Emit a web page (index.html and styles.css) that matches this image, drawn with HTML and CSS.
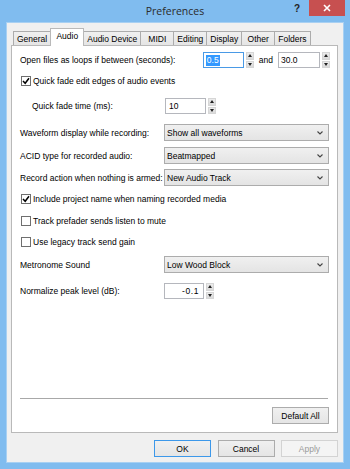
FILE: index.html
```html
<!DOCTYPE html>
<html>
<head>
<meta charset="utf-8">
<title>Preferences</title>
<link rel="stylesheet" href="styles.css">
</head>
<body>
<div class="window">
  <div class="titlebar">
    <div class="title">Preferences</div>
    <div class="controls">
      <span class="help">?</span>
      <span class="close"><svg width="8" height="8" viewBox="0 0 8 8"><path d="M1 1 L7 7 M7 1 L1 7" stroke="#fff" stroke-width="1.6" fill="none"/></svg></span>
    </div>
  </div>
  <div class="client">
    <div class="tabs">
      <div class="tab">General</div>
      <div class="tab active">Audio</div>
      <div class="tab">Audio Device</div>
      <div class="tab">MIDI</div>
      <div class="tab">Editing</div>
      <div class="tab">Display</div>
      <div class="tab">Other</div>
      <div class="tab">Folders</div>
    </div>
    <div class="panel">
      <div class="row first">
        <span class="label">Open files as loops if between (seconds):</span>
        <div class="pair">
          <div class="spin w41"><div class="field focus"><span class="hl">0.5</span></div><div class="arrows"><span class="up"></span><span class="down"></span></div></div>
          <span class="and">and</span>
          <div class="spin w42"><div class="field">30.0</div><div class="arrows"><span class="up"></span><span class="down"></span></div></div>
        </div>
      </div>
      <div class="row">
        <span class="check on"><svg width="8" height="8" viewBox="0 0 8 8"><path d="M1 4 L3.2 6.3 L7 1.3" stroke="#000" stroke-width="1.5" fill="none"/></svg></span>
        <span>Quick fade edit edges of audio events</span>
      </div>
      <div class="row g9">
        <span class="label indent">Quick fade time (ms):</span>
        <div class="spin w41"><div class="field pad3">10</div><div class="arrows"><span class="up"></span><span class="down"></span></div></div>
      </div>
      <div class="row tall g10">
        <span class="label">Waveform display while recording:</span>
        <div class="combo"><span>Show all waveforms</span><svg class="chev" width="6" height="4" viewBox="0 0 6 4"><path d="M0.5 0.5 L3 3 L5.5 0.5" stroke="#444" stroke-width="1.1" fill="none"/></svg></div>
      </div>
      <div class="row tall g6">
        <span class="label">ACID type for recorded audio:</span>
        <div class="combo"><span>Beatmapped</span><svg class="chev" width="6" height="4" viewBox="0 0 6 4"><path d="M0.5 0.5 L3 3 L5.5 0.5" stroke="#444" stroke-width="1.1" fill="none"/></svg></div>
      </div>
      <div class="row tall">
        <span class="label">Record action when nothing is armed:</span>
        <div class="combo"><span>New Audio Track</span><svg class="chev" width="6" height="4" viewBox="0 0 6 4"><path d="M0.5 0.5 L3 3 L5.5 0.5" stroke="#444" stroke-width="1.1" fill="none"/></svg></div>
      </div>
      <div class="row">
        <span class="check on"><svg width="8" height="8" viewBox="0 0 8 8"><path d="M1 4 L3.2 6.3 L7 1.3" stroke="#000" stroke-width="1.5" fill="none"/></svg></span>
        <span>Include project name when naming recorded media</span>
      </div>
      <div class="row g6">
        <span class="check"></span>
        <span>Track prefader sends listen to mute</span>
      </div>
      <div class="row">
        <span class="check"></span>
        <span>Use legacy track send gain</span>
      </div>
      <div class="row tall g6">
        <span class="label">Metronome Sound</span>
        <div class="combo"><span>Low Wood Block</span><svg class="chev" width="6" height="4" viewBox="0 0 6 4"><path d="M0.5 0.5 L3 3 L5.5 0.5" stroke="#444" stroke-width="1.1" fill="none"/></svg></div>
      </div>
      <div class="row g10">
        <span class="label">Normalize peak level (dB):</span>
        <div class="spin w40"><div class="field right">-0.1</div><div class="arrows"><span class="up"></span><span class="down"></span></div></div>
      </div>
      <div class="spacer"></div>
      <div class="separator"></div>
      <div class="default-row"><button class="btn">Default All</button></div>
    </div>
    <div class="buttons">
      <button class="btn default">OK</button>
      <button class="btn">Cancel</button>
      <button class="btn disabled">Apply</button>
    </div>
  </div>
</div>
</body>
</html>
```
FILE: styles.css
```css
* { box-sizing: border-box; }
html, body { margin: 0; padding: 0; }
body {
  width: 350px;
  height: 469px;
  overflow: hidden;
  font-family: "Liberation Sans", Arial, sans-serif;
  font-size: 8.5px;
  color: #000;
  background: #7fbbee;
}
.window {
  width: 350px;
  height: 469px;
  background: #80bcef;
  display: flex;
  flex-direction: column;
}
.titlebar {
  height: 23px;
  flex: none;
  display: grid;
  grid-template-columns: 1fr auto 1fr;
  align-items: start;
}
.title {
  grid-column: 2;
  font-family: "Open Sans", "Noto Sans", sans-serif;
  font-size: 10.5px;
  line-height: 23px;
  color: #2b2b2b;
}
.controls {
  grid-column: 3;
  justify-self: end;
  display: flex;
  align-items: flex-start;
  margin-right: 5px;
}
.help {
  font: bold 10px "Liberation Sans", Arial, sans-serif;
  color: #222;
  margin-top: 3px;
  margin-right: 9px;
}
.close {
  width: 36px;
  height: 16px;
  background: #c75050;
  display: flex;
  align-items: center;
  justify-content: center;
}
.client {
  flex: 1;
  margin: 0 7px 7px 7px;
  background: #f0f0f0;
  box-shadow: 0 0 0 1px #a8d0f2;
  display: flex;
  flex-direction: column;
  padding: 6px 5px 5px 4px;
}
.tabs {
  height: 17px;
  flex: none;
  display: flex;
  align-items: flex-end;
  padding-left: 2px;
  position: relative;
  z-index: 1;
  margin-bottom: -1px;
}
.tab {
  height: 14px;
  min-width: 34px;
  padding: 0 3px;
  margin-left: -1px;
  margin-bottom: 1px;
  border: 1px solid #acacac;
  border-bottom: none;
  background: linear-gradient(#f0f0f0, #e5e5e5);
  display: flex;
  align-items: center;
  justify-content: center;
  white-space: nowrap;
  padding-top: 1px;
}
.tab:first-child { margin-left: 0; }
.tab.active {
  height: 18px;
  margin-bottom: 0;
  background: #fff;
  border-color: #b9b9b9;
  align-items: flex-start;
  padding-top: 2px;
  position: relative;
}
.panel {
  flex: 1;
  background: #fff;
  border: 1px solid #b9b9b9;
  display: flex;
  flex-direction: column;
  padding: 6px 8px 8px 8px;
}
.row {
  display: flex;
  align-items: center;
  height: 16px;
  margin-top: 5px;
  white-space: nowrap;
}
.row.first { margin-top: 0; }
.row.tall { height: 17px; }
.row.g6 { margin-top: 6px; }
.row.g9 { margin-top: 9px; }
.row.g10 { margin-top: 10px; }
.label {
  width: 144px;
  flex: none;
}
.label.indent {
  width: 133px;
  margin-left: 12px;
}
.row.first .label { width: auto; }
.pair {
  margin-left: auto;
  margin-right: -1px;
  display: flex;
  align-items: center;
}
.and { margin: 0 5px; }
.spin {
  display: flex;
  align-items: stretch;
  height: 16px;
  gap: 2px;
}
.field {
  background: #fff;
  border: 1px solid #b5b7bd;
  display: flex;
  align-items: center;
  padding-left: 2px;
}
.w41 .field { width: 41px; }
.w42 .field { width: 42px; }
.w40 .field { width: 40px; }
.field.pad3 { padding-left: 3px; }
.field.right { justify-content: flex-end; padding-right: 4px; letter-spacing: 0.6px; }
.field.focus { border-color: #4a9ae6; }
.hl {
  background: #3399ff;
  color: #fff;
  padding: 0 1px;
  line-height: 11px;
}
.arrows {
  width: 8px;
  display: flex;
  flex-direction: column;
  gap: 1px;
}
.arrows span {
  flex: 1;
  background: linear-gradient(#ececec, #dadada);
  border: 1px solid #d6d6d6;
  display: flex;
  justify-content: center;
}
.arrows .up { align-items: flex-start; padding-top: 1px; }
.arrows .down { align-items: flex-end; padding-bottom: 1px; }
.arrows span::before {
  content: "";
  width: 0;
  height: 0;
  border-left: 2px solid transparent;
  border-right: 2px solid transparent;
}
.arrows .up::before { border-bottom: 3px solid #222; }
.arrows .down::before { border-top: 3px solid #222; }
.check {
  width: 10px;
  height: 10px;
  flex: none;
  border: 1px solid #6f6f6f;
  background: #fff;
  margin-left: 1px;
  margin-right: 2px;
  display: flex;
  align-items: center;
  justify-content: center;
}
.combo {
  flex: 1;
  height: 17px;
  border: 1px solid #acacac;
  background: linear-gradient(#f0f0f0, #e4e4e4);
  display: flex;
  align-items: center;
  justify-content: space-between;
  padding: 0 5px 0 2px;
}
.chev { flex: none; }
.spacer { flex: 1; }
.separator {
  height: 1px;
  background: #a8a8a8;
  margin: 0 1px 8px 0;
}
.default-row {
  display: flex;
  justify-content: flex-end;
}
.btn {
  width: 57px;
  height: 17px;
  border: 1px solid #acacac;
  background: linear-gradient(#f0f0f0, #e5e5e5);
  font-family: "Liberation Sans", Arial, sans-serif;
  font-size: 8.5px;
  color: #000;
  padding: 0;
  margin: 0;
}
.buttons {
  flex: none;
  display: flex;
  justify-content: flex-end;
  gap: 6.5px;
  margin-top: 7px;
}
.btn.default { border-color: #3c98ea; }
.btn.disabled {
  background: #f4f4f4;
  border-color: #d3d3d3;
  color: #9a9a9a;
}
```
